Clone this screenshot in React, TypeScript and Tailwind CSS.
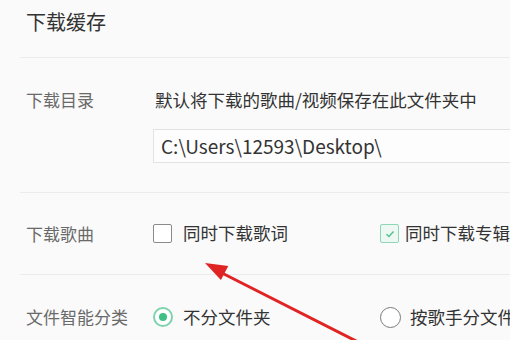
import React from "react";

const font = { fontFamily: '"Noto Sans CJK SC", "Noto Sans", sans-serif' };

function Checkbox({ checked }: { checked?: boolean }) {
  if (checked) {
    return (
      <span className="flex h-[19px] w-[19px] items-center justify-center rounded-[2px] border-[1.5px] border-[#8fd6b6] bg-[#eef8f3]">
        <svg width="12" height="12" viewBox="0 0 12 12">
          <path d="M2.5 6.2 L5 8.5 L9.5 3.5" fill="none" stroke="#56c08f" strokeWidth="1.5" />
        </svg>
      </span>
    );
  }
  return <span className="h-[19px] w-[19px] rounded-[2px] border-[1.5px] border-[#8a8a8a] bg-white" />;
}

function Radio({ checked }: { checked?: boolean }) {
  if (checked) {
    return (
      <span className="flex h-[20px] w-[20px] items-center justify-center rounded-full border-[2px] border-[#7dd3ad] bg-white">
        <span className="h-[8px] w-[8px] rounded-full bg-[#3fbf86]" />
      </span>
    );
  }
  return <span className="h-[21px] w-[21px] rounded-full border-[1.5px] border-[#7a7a7a] bg-white" />;
}

export default function App() {
  return (
    <div className="relative h-[340px] w-[510px] overflow-hidden bg-[#fafafa]" style={font}>
      <div className="h-[57px] pl-[26px] pt-[10px] text-[20px] leading-[24px] text-[#333]">下载缓存</div>
      <div className="ml-[20px] h-px bg-[#ebebeb]" />

      <div className="flex pb-[29px] pt-[30px]">
        <div className="w-[153px] shrink-0 pl-[26px] text-[17px] leading-[24px] text-[#6a6a6a]">下载目录</div>
        <div className="flex flex-col">
          <div className="whitespace-nowrap pl-[2px] text-[17.5px] leading-[24px] text-[#333]">
            默认将下载的歌曲/视频保存在此文件夹中
          </div>
          <div className="mt-[17px] flex h-[34px] w-[420px] items-center border border-[#e3e3e3] bg-[#fdfdfd] pl-[7px] text-[19px] text-[#333]">
            C:\Users\12593\Desktop\
          </div>
        </div>
      </div>
      <div className="ml-[20px] h-px bg-[#ebebeb]" />

      <div className="flex h-[81px] items-center">
        <div className="w-[153px] shrink-0 pl-[26px] text-[17px] leading-[24px] text-[#6a6a6a]">下载歌曲</div>
        <div className="flex w-[227px] shrink-0 items-center gap-[11px]">
          <Checkbox />
          <span className="whitespace-nowrap text-[17.5px] text-[#333]">同时下载歌词</span>
        </div>
        <div className="flex shrink-0 items-center gap-[6px]">
          <Checkbox checked />
          <span className="whitespace-nowrap text-[17.5px] text-[#333]">同时下载专辑</span>
        </div>
      </div>
      <div className="ml-[20px] h-px bg-[#ebebeb]" />

      <div className="flex h-[84px] items-center">
        <div className="w-[153px] shrink-0 pl-[26px] text-[17px] leading-[24px] text-[#6a6a6a]">文件智能分类</div>
        <div className="flex w-[227px] shrink-0 items-center gap-[10px]">
          <Radio checked />
          <span className="whitespace-nowrap text-[17.5px] text-[#333]">不分文件夹</span>
        </div>
        <div className="flex shrink-0 items-center gap-[9px]">
          <Radio />
          <span className="whitespace-nowrap text-[17.5px] text-[#333]">按歌手分文件夹</span>
        </div>
      </div>

      <svg className="pointer-events-none absolute left-0 top-0" width="510" height="340" viewBox="0 0 510 340">
        <line x1="220" y1="272" x2="360" y2="343" stroke="#e02424" strokeWidth="3" strokeLinecap="round" />
        <polygon points="205,263 228.3,265.9 220.9,280.1" fill="#e02424" />
      </svg>
    </div>
  );
}
